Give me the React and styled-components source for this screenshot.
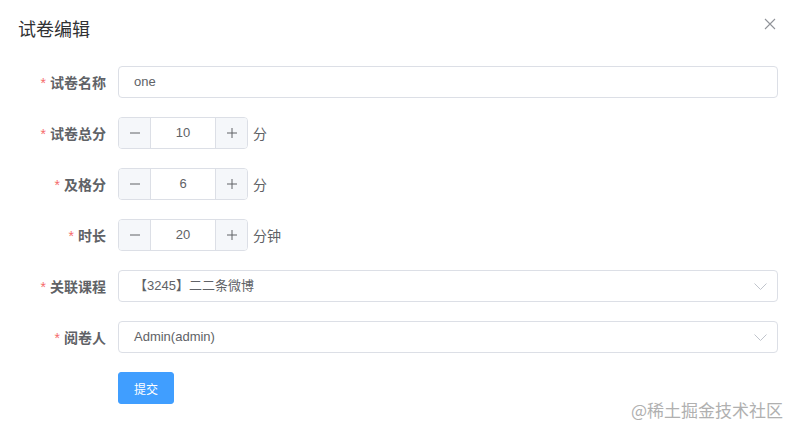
import React from "react";
import styled, { createGlobalStyle } from "styled-components";

const Global = createGlobalStyle`
  html, body { margin: 0; padding: 0; background: #fff; }
  body { font-family: "Liberation Sans", "Noto Sans CJK SC", sans-serif; color: #606266; }
  * { box-sizing: border-box; }
`;

const Dialog = styled.div`
  position: relative;
  width: 798px;
  height: 434px;
  background: #fff;
  overflow: hidden;
`;

const Header = styled.div`
  display: flex;
  align-items: center;
  justify-content: space-between;
  height: 24px;
  margin-top: 16px;
  padding: 0 20px 0 18px;
`;

const Title = styled.span`
  font-size: 18px;
  line-height: 24px;
  color: #303133;
  font-family: "Noto Sans CJK SC", sans-serif;
`;

const Close = styled.button`
  border: 0;
  background: none;
  padding: 0;
  width: 16px;
  height: 16px;
  display: flex;
  align-items: center;
  justify-content: center;
  margin-top: -8px;
  cursor: pointer;
`;

const Form = styled.form`
  display: flex;
  flex-direction: column;
  gap: 19px;
  padding: 26px 20px 0 0;
`;

const Row = styled.div`
  display: flex;
  align-items: center;
  height: 32px;
`;

const Label = styled.label`
  width: 118px;
  flex: none;
  padding-right: 12px;
  text-align: right;
  font-size: 14px;
  line-height: 32px;
  height: 32px;
  font-weight: bold;
  color: #606266;
  font-family: "Noto Sans CJK SC", sans-serif;
`;

const Star = styled.span`
  color: #f56c6c;
  margin-right: 4px;
  font-weight: normal;
  font-family: "Liberation Sans", sans-serif;
`;

const TextBox = styled.div`
  flex: 1;
  height: 32px;
  border: 1px solid #dcdfe6;
  border-radius: 4px;
  display: flex;
  align-items: center;
  justify-content: space-between;
  padding: 0 10px 0 15px;
  font-size: 13px;
  color: #606266;
`;

const Value = styled.span`
  font-family: "Liberation Sans", "Noto Sans CJK SC", sans-serif;
  font-size: 13px;
  line-height: 30px;
`;

const Number = styled.div`
  width: 130px;
  height: 32px;
  border: 1px solid #dcdfe6;
  border-radius: 4px;
  display: flex;
  overflow: hidden;
`;

const Step = styled.span`
  width: 32px;
  flex: none;
  background: #f5f7fa;
  display: flex;
  align-items: center;
  justify-content: center;
  border-${(p) => (p.side === "left" ? "right" : "left")}: 1px solid #dcdfe6;
`;

const NumValue = styled.span`
  flex: 1;
  text-align: center;
  line-height: 30px;
  font-size: 13px;
  color: #606266;
`;

const Unit = styled.span`
  margin-left: 5px;
  font-size: 14px;
  line-height: 32px;
  color: #606266;
  font-family: "Noto Sans CJK SC", sans-serif;
`;

const Submit = styled.button`
  margin-left: 118px;
  width: 56px;
  height: 32px;
  border: 1px solid #409eff;
  background: #409eff;
  color: #fff;
  border-radius: 3px;
  font-size: 12px;
  font-family: "Noto Sans CJK SC", sans-serif;
  padding: 0;
`;

const Watermark = styled.div`
  position: absolute;
  right: 15px;
  bottom: 14px;
  font-size: 17px;
  line-height: 20px;
  color: #b0b0b0;
  font-family: "Noto Sans CJK SC", sans-serif;
`;

const Minus = () => (
  <svg width="12" height="12" viewBox="0 0 12 12"><path d="M1 6h10" stroke="#606266" strokeWidth="1" /></svg>
);
const Plus = () => (
  <svg width="12" height="12" viewBox="0 0 12 12"><path d="M1 6h10M6 1v10" stroke="#606266" strokeWidth="1" /></svg>
);
const Arrow = () => (
  <svg width="13" height="7" viewBox="0 0 13 7"><path d="M0.5 0.5l6 6 6-6" fill="none" stroke="#c0c4cc" strokeWidth="1" /></svg>
);

const NumberField = ({ value }) => (
  <Number>
    <Step side="left"><Minus /></Step>
    <NumValue>{value}</NumValue>
    <Step side="right"><Plus /></Step>
  </Number>
);

export default function App() {
  return (
    <>
      <Global />
      <Dialog>
        <Header>
          <Title>试卷编辑</Title>
          <Close aria-label="close">
            <svg width="12" height="12" viewBox="0 0 12 12">
              <path d="M1 1l10 10M11 1L1 11" stroke="#909399" strokeWidth="1.1" />
            </svg>
          </Close>
        </Header>
        <Form>
          <Row>
            <Label><Star>*</Star>试卷名称</Label>
            <TextBox><Value>one</Value></TextBox>
          </Row>
          <Row>
            <Label><Star>*</Star>试卷总分</Label>
            <NumberField value="10" />
            <Unit>分</Unit>
          </Row>
          <Row>
            <Label><Star>*</Star>及格分</Label>
            <NumberField value="6" />
            <Unit>分</Unit>
          </Row>
          <Row>
            <Label><Star>*</Star>时长</Label>
            <NumberField value="20" />
            <Unit>分钟</Unit>
          </Row>
          <Row>
            <Label><Star>*</Star>关联课程</Label>
            <TextBox><Value>【3245】二二条微博</Value><Arrow /></TextBox>
          </Row>
          <Row>
            <Label><Star>*</Star>阅卷人</Label>
            <TextBox><Value>Admin(admin)</Value><Arrow /></TextBox>
          </Row>
          <Row>
            <Submit type="button">提交</Submit>
          </Row>
        </Form>
        <Watermark>@稀土掘金技术社区</Watermark>
      </Dialog>
    </>
  );
}
